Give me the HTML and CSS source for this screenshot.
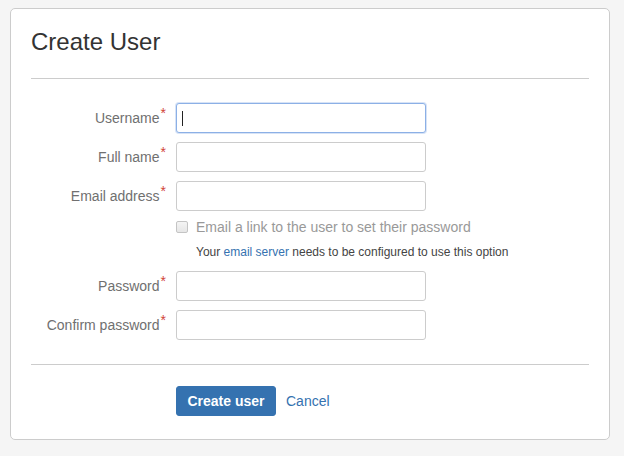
FILE: index.html
```html
<!DOCTYPE html>
<html lang="en">
<head>
<meta charset="utf-8">
<title>Create User</title>
<link rel="stylesheet" href="styles.css">
</head>
<body>
<div class="card">
  <h1 class="title">Create User</h1>
  <hr class="divider divider-top">
  <form class="form">
    <div class="field-group">
      <label class="label">Username<span class="req">*</span></label>
      <span class="input-wrap is-focused"><input class="text" type="text"></span>
    </div>
    <div class="field-group">
      <label class="label">Full name<span class="req">*</span></label>
      <span class="input-wrap"><input class="text" type="text"></span>
    </div>
    <div class="field-group">
      <label class="label">Email address<span class="req">*</span></label>
      <span class="input-wrap"><input class="text" type="text"></span>
    </div>
    <div class="check-group">
      <span class="checkbox"></span>
      <span class="check-label">Email a link to the user to set their password</span>
    </div>
    <div class="help">Your <a class="help-link" href="#">email server</a> needs to be configured to use this option</div>
    <div class="field-group">
      <label class="label">Password<span class="req">*</span></label>
      <span class="input-wrap"><input class="text" type="password"></span>
    </div>
    <div class="field-group">
      <label class="label">Confirm password<span class="req">*</span></label>
      <span class="input-wrap"><input class="text" type="password"></span>
    </div>
  </form>
  <hr class="divider divider-bottom">
  <div class="buttons">
    <button class="button-primary" type="button">Create user</button>
    <a class="cancel" href="#">Cancel</a>
  </div>
</div>
</body>
</html>
```

FILE: styles.css
```css
html, body {
  margin: 0;
  background: #f5f5f5;
}
body {
  padding: 8px 0 0 10px;
  font-family: "Liberation Sans", Arial, sans-serif;
  font-size: 14px;
  color: #333;
}
.card {
  box-sizing: border-box;
  width: 600px;
  background: #fff;
  border: 1px solid #cccccc;
  border-radius: 5px;
  padding: 18px 20px 23px;
}
.title {
  margin: 0;
  font-size: 24px;
  line-height: 30px;
  font-weight: normal;
  color: #333;
}
.divider {
  border: 0;
  border-top: 1px solid #cccccc;
  height: 0;
  margin: 0;
}
.divider-top {
  margin: 21px 0 24px;
}
.divider-bottom {
  margin: 24px 0 21px;
}
.form {
  margin: 0;
}
.field-group {
  display: flex;
  align-items: center;
  height: 30px;
  margin-bottom: 9px;
}
.field-group:last-child {
  margin-bottom: 0;
}
.label {
  box-sizing: border-box;
  width: 145px;
  padding-right: 10px;
  text-align: right;
  line-height: 20px;
  color: #707070;
}
.req {
  color: #d04437;
  line-height: 0;
  vertical-align: 5px;
  margin-left: 1px;
}
.input-wrap {
  position: relative;
  display: block;
  width: 250px;
  height: 30px;
}
.text {
  box-sizing: border-box;
  width: 250px;
  height: 30px;
  margin: 0;
  padding: 4px 6px;
  border: 1px solid #cccccc;
  border-radius: 3px;
  background: #fff;
  font-family: inherit;
  font-size: 14px;
  outline: none;
}
.is-focused .text {
  border-color: #8cb0e6;
  box-shadow: 0 0 0 1px rgba(140, 176, 230, 0.35);
}
.is-focused::after {
  content: "";
  position: absolute;
  left: 6px;
  top: 8px;
  width: 1px;
  height: 15px;
  background: #222;
}
.check-group {
  display: flex;
  align-items: center;
  gap: 8px;
  margin: -1px 0 0 145px;
  line-height: 16px;
}
.checkbox {
  box-sizing: border-box;
  width: 12px;
  height: 12px;
  border: 1px solid #c4c4c4;
  border-radius: 2px;
  background: linear-gradient(#f4f4f4, #e6e6e6);
}
.check-label {
  color: #999999;
}
.help {
  margin: 9px 0 11px 165px;
  font-size: 12px;
  line-height: 16px;
  color: #444;
}
.help-link {
  color: #3572b0;
  text-decoration: none;
}
.buttons {
  display: flex;
  align-items: center;
  gap: 10px;
  padding-left: 145px;
}
.button-primary {
  box-sizing: border-box;
  height: 30px;
  padding: 0 10px;
  width: 100px;
  border: 1px solid #3572b0;
  border-radius: 3px;
  background: #3572b0;
  color: #fff;
  font-family: inherit;
  font-size: 14px;
  font-weight: bold;
  cursor: pointer;
}
.cancel {
  color: #3572b0;
  text-decoration: none;
}
```
